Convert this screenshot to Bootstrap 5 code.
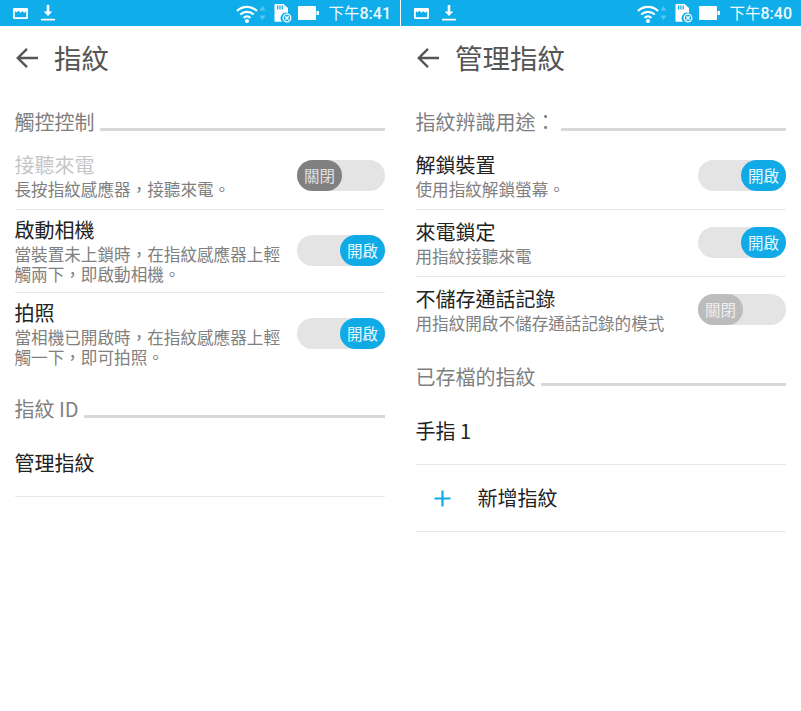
<!DOCTYPE html>
<html lang="zh-Hant">
<head>
<meta charset="utf-8">
<title>指紋</title>
<link href="https://cdn.jsdelivr.net/npm/bootstrap@5.3.0/dist/css/bootstrap.min.css" rel="stylesheet">
<style>
html,body{margin:0;background:#fff;height:711px;overflow:hidden}
body{font-family:"Noto Sans CJK TC","Noto Sans",sans-serif;line-height:1.2}
.shell{width:801px;height:711px;gap:1px}
.phone{width:400px;flex:none}
.sbar{height:26px;background:#0fadea;color:#fff;padding:0 9px 0 13px}
.sbar svg{display:block;flex:none}
.g-dl{margin-left:13px}
.g-arr{margin-left:1px}
.g-sd{margin-left:8px}
.g-bat{margin-left:6px}
.clock{font-size:15.5px;line-height:26px;color:#eef9fe;white-space:nowrap;margin-left:9px}
.clock b{font-family:Roboto,sans-serif;font-weight:500;font-size:16px}
.appbar{height:64px;padding:0 15px 0 16px;gap:16px}
.appbar h1{font-size:27.5px;font-weight:400;color:#555;margin:-2px 0 0;line-height:36px}
.body-pad{padding:0 15px}
.sect{height:40px;margin-top:13px;color:#7f7f7f;font-size:20px;gap:5px}
.sect span{margin:-2px 0 0 -.5px}
.sect.later{margin-top:14px}
.sect i{flex:1;height:3px;background:#d6d9d9;margin-top:12px;display:block}
.item{min-height:67px;border-bottom:1px solid #e9e9e9}
.item.tall{min-height:83px}
.item.bare{border-bottom-color:transparent}
.txt{margin-left:-.5px}
.ttl{font-size:20px;line-height:24px;color:#222;white-space:nowrap}
.ttl.off{color:#c6c6c6}
.sub{font-size:16.6px;line-height:20px;color:#808080;width:276px;margin-top:2px;margin-bottom:0}
.sw{width:88px;height:31px;border-radius:16px;background:#e4e4e4;flex:none;margin-top:-2px}
.sw span{width:45px;height:31px;border-radius:16px;font-size:15.5px;line-height:31px;text-align:center;color:#fff;display:block}
.sw.on{justify-content:flex-end}
.sw.on span{background:#10abe6;color:#e6f7fe}
.sw.dark span{background:#808080;color:#e0e0e0}
.sw.pale span{background:#bcbcbc;color:#eee}
.plus{flex:none;margin-left:18px;margin-right:27px}
</style>
</head>
<body>
<svg width="0" height="0" class="position-absolute">
<defs>
<symbol id="ic-pic" viewBox="0 0 15 11"><path fill="#fff" fill-rule="evenodd" d="M1.2 0h12.6c.7 0 1.2.5 1.2 1.2v8.600c0 .7-.5 1.200-1.200 1.200H1.200C.5 11 0 10.500 0 9.800V1.200C0 .5.5 0 1.200 0zM1.800 3.200v6h11.400v-6l-1.700 1.600-2.300-1.500-1.700 1.500-2-2-1.700 1.400z"/></symbol>
<symbol id="ic-dl" viewBox="0 0 14 16"><path fill="#fff" d="M5.700 0h2.600v6.500h3L7 11 2.700 6.500h3zM0 13.800h14V15.600H0z"/></symbol>
<symbol id="ic-wifi" viewBox="0 0 22 19"><g fill="none" stroke="#fff" stroke-width="2.300"><path d="M1 7C6.800 1.600 15.200 1.600 21 7"/><path d="M4.300 10.500c3.800-3.500 9.600-3.500 13.400 0"/><path d="M7.600 13.800c2-1.700 4.800-1.700 6.800 0"/></g><circle cx="11" cy="17" r="2" fill="#fff"/></symbol>
<symbol id="ic-arr" viewBox="0 0 7 16"><path fill="#5cc6f0" d="M3.500 1 6.500 5.500H.5zM.5 10.500h6L3.500 15z"/></symbol>
<symbol id="ic-sd" viewBox="0 0 18 20"><path fill="#fff" d="M1.500 1h8l4.500 4v5a5.500 5.500 0 0 0-6 8.800H1.500c-.7 0-1-.4-1-1V2c0-.6.4-1 1-1z"/><path fill="#0fadea" d="M3 2.500h1.300v4H3zM5.300 2.500h1.300v4H5.300zM7.600 2.500h1.300v4H7.600z"/><circle cx="13" cy="15" r="3.800" fill="none" stroke="#fff" stroke-width="1.300"/><path stroke="#fff" stroke-width="1.300" d="M11.300 13.300l3.400 3.400M14.700 13.300l-3.400 3.400"/></symbol>
<symbol id="ic-bat" viewBox="0 0 21 14"><path fill="#fff" d="M0 1c0-.5.500-1 1-1h16c.5 0 1 .5 1 1v12c0 .5-.5 1-1 1H1c-.5 0-1-.5-1-1zM18.500 5H21v4h-2.500z"/></symbol>
<symbol id="ic-back" viewBox="0 0 22 22"><path fill="none" stroke="#555" stroke-width="2.400" d="M22 11H2M11 1.800 1.800 11l9.200 9.200"/></symbol>
</defs>
</svg>
<main class="shell d-flex">

<section class="phone">
  <div class="sbar d-flex align-items-center">
    <svg width="15" height="11"><use href="#ic-pic"/></svg>
    <svg width="14" height="16" class="g-dl"><use href="#ic-dl"/></svg>
    <svg width="22" height="19" class="ms-auto"><use href="#ic-wifi"/></svg>
    <svg width="7" height="16" class="g-arr"><use href="#ic-arr"/></svg>
    <svg width="18" height="20" class="g-sd"><use href="#ic-sd"/></svg>
    <svg width="21" height="14" class="g-bat"><use href="#ic-bat"/></svg>
    <span class="clock">下午<b>8:41</b></span>
  </div>
  <header class="appbar d-flex align-items-center">
    <svg width="22" height="22"><use href="#ic-back"/></svg>
    <h1>指紋</h1>
  </header>
  <div class="body-pad">
    <div class="sect d-flex align-items-center"><span>觸控控制</span><i></i></div>
    <div class="item d-flex align-items-center justify-content-between">
      <div class="txt"><div class="ttl off">接聽來電</div><p class="sub">長按指紋感應器&#xFF0C;接聽來電。</p></div>
      <div class="sw dark d-flex"><span>關閉</span></div>
    </div>
    <div class="item tall d-flex align-items-center justify-content-between">
      <div class="txt"><div class="ttl">啟動相機</div><p class="sub">當裝置未上鎖時&#xFF0C;在指紋感應器上輕觸兩下&#xFF0C;即啟動相機。</p></div>
      <div class="sw on d-flex"><span>開啟</span></div>
    </div>
    <div class="item tall bare d-flex align-items-center justify-content-between" >
      <div class="txt"><div class="ttl">拍照</div><p class="sub">當相機已開啟時&#xFF0C;在指紋感應器上輕觸一下&#xFF0C;即可拍照。</p></div>
      <div class="sw on d-flex"><span>開啟</span></div>
    </div>
    <div class="sect later d-flex align-items-center"><span>指紋 ID</span><i></i></div>
    <div class="item d-flex align-items-center"><div class="ttl txt">管理指紋</div></div>
  </div>
</section>

<section class="phone">
  <div class="sbar d-flex align-items-center">
    <svg width="15" height="11"><use href="#ic-pic"/></svg>
    <svg width="14" height="16" class="g-dl"><use href="#ic-dl"/></svg>
    <svg width="22" height="19" class="ms-auto"><use href="#ic-wifi"/></svg>
    <svg width="7" height="16" class="g-arr"><use href="#ic-arr"/></svg>
    <svg width="18" height="20" class="g-sd"><use href="#ic-sd"/></svg>
    <svg width="21" height="14" class="g-bat"><use href="#ic-bat"/></svg>
    <span class="clock">下午<b>8:40</b></span>
  </div>
  <header class="appbar d-flex align-items-center">
    <svg width="22" height="22"><use href="#ic-back"/></svg>
    <h1>管理指紋</h1>
  </header>
  <div class="body-pad">
    <div class="sect d-flex align-items-center"><span>指紋辨識用途&#xFF1A;</span><i></i></div>
    <div class="item d-flex align-items-center justify-content-between">
      <div class="txt"><div class="ttl">解鎖裝置</div><p class="sub">使用指紋解鎖螢幕。</p></div>
      <div class="sw on d-flex"><span>開啟</span></div>
    </div>
    <div class="item d-flex align-items-center justify-content-between">
      <div class="txt"><div class="ttl">來電鎖定</div><p class="sub">用指紋接聽來電</p></div>
      <div class="sw on d-flex"><span>開啟</span></div>
    </div>
    <div class="item bare d-flex align-items-center justify-content-between">
      <div class="txt"><div class="ttl">不儲存通話記錄</div><p class="sub">用指紋開啟不儲存通話記錄的模式</p></div>
      <div class="sw pale d-flex"><span>關閉</span></div>
    </div>
    <div class="sect later d-flex align-items-center"><span>已存檔的指紋</span><i></i></div>
    <div class="item d-flex align-items-center"><div class="ttl txt">手指 1</div></div>
    <div class="item d-flex align-items-center">
      <svg class="plus" width="17" height="17" viewBox="0 0 17 17"><path fill="none" stroke="#10abe6" stroke-width="2.200" d="M.5 8.500h16M8.500.5v16"/></svg>
      <div class="ttl txt">新增指紋</div>
    </div>
  </div>
</section>

</main>
</body>
</html>
